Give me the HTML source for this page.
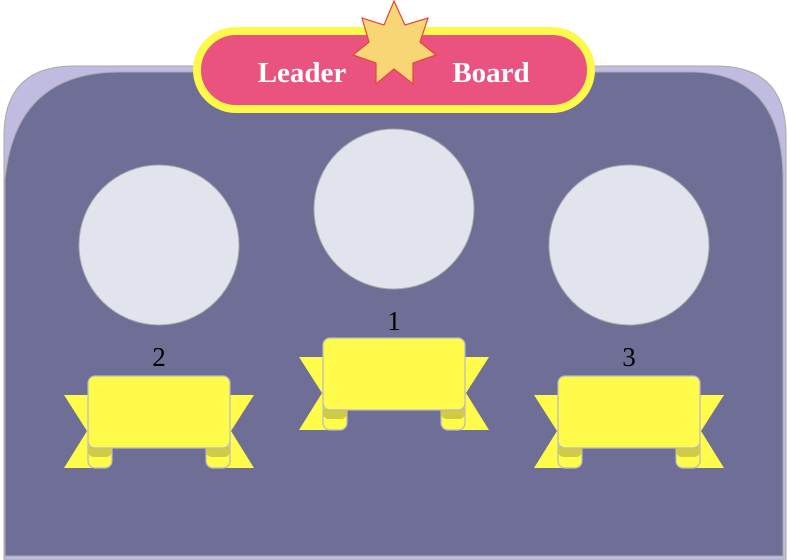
<!DOCTYPE html>
<html><head><meta charset="utf-8"><style>
html,body{margin:0;padding:0;background:#fff;width:788px;height:560px;overflow:hidden}
svg{display:block}
</style></head><body>
<svg width="788" height="560" viewBox="0 0 788 560" xmlns="http://www.w3.org/2000/svg">
<defs>
<g id="rib">
  <polygon points="299,357 340,357 340,430 299,430 322,393" fill="#fefb4a"/>
  <polygon points="489,357 448,357 448,430 489,430 466,393" fill="#fefb4a"/>
  <rect x="323" y="398" width="24" height="32" rx="7" fill="#fefb4a" stroke="#b8b8c8" stroke-width="1.2"/>
  <rect x="323" y="406" width="24" height="13" rx="6" fill="#cfcb45"/>
  <rect x="441" y="398" width="24" height="32" rx="7" fill="#fefb4a" stroke="#b8b8c8" stroke-width="1.2"/>
  <rect x="441" y="406" width="24" height="13" rx="6" fill="#cfcb45"/>
  <rect x="323" y="338" width="142" height="72" rx="7" fill="#fefb4a" stroke="#b8b8c8" stroke-width="1.2"/>
</g>
</defs>
<path d="M4,560 L4,136 Q4,66 74,66 L716,66 Q786,66 786,136 L786,560 Z" fill="#c0bbe0" stroke="#aaa" stroke-width="1"/>
<path d="M5,556 L5,180 Q15,72 120,72 L690,72 Q783,72 783,180 L783,556 Z" fill="#6f6e97" stroke="#aaa" stroke-width="1"/>
<rect x="197" y="31" width="394" height="78" rx="39" fill="#ea5280" stroke="#fdf94a" stroke-width="8"/>
<text x="302" y="82" text-anchor="middle" font-family="Liberation Serif, serif" font-weight="bold" font-size="29" fill="#fff">Leader</text>
<text x="491" y="82" text-anchor="middle" font-family="Liberation Serif, serif" font-weight="bold" font-size="29" fill="#fff">Board</text>
<polygon points="394,1 405,25 428,18 420,42 436,55 413,63 413,84 394,69 376,84 376,63 353,55 369,42 362,18 384,25" fill="#f8d676" stroke="#e8443a" stroke-width="1.2"/>
<circle cx="159" cy="245" r="80" fill="#e1e4ec" stroke="#aaa" stroke-width="1"/>
<circle cx="394" cy="209" r="80" fill="#e1e4ec" stroke="#aaa" stroke-width="1"/>
<circle cx="629" cy="245" r="80" fill="#e1e4ec" stroke="#aaa" stroke-width="1"/>
<use href="#rib"/>
<use href="#rib" transform="translate(-235,38)"/>
<use href="#rib" transform="translate(235,38)"/>
<text x="394" y="330" text-anchor="middle" font-family="Liberation Serif, serif" font-size="27" fill="#000">1</text>
<text x="159" y="366" text-anchor="middle" font-family="Liberation Serif, serif" font-size="27" fill="#000">2</text>
<text x="629" y="366" text-anchor="middle" font-family="Liberation Serif, serif" font-size="27" fill="#000">3</text>
</svg>
</body></html>
